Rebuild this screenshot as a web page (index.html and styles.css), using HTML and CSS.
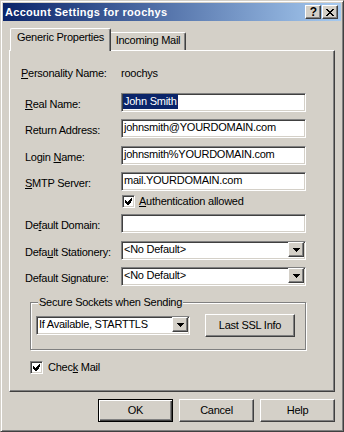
FILE: index.html
```html
<!DOCTYPE html>
<html lang="en">
<head>
    <meta charset="UTF-8">
    <title>Account Settings for roochys</title>
    <link rel="stylesheet" href="styles.css">
</head>
<body>
    <div class="window">
        <div class="titlebar">
            <span class="title">Account Settings for roochys</span>
            <div class="title-buttons">
                <span class="tbtn help">?</span>
                <span class="tbtn">
                    <svg width="8" height="7" viewBox="0 0 8 7" shape-rendering="crispEdges">
                        <path d="M0 0h2v1h-2zM6 0h2v1h-2zM1 1h2v1h-2zM5 1h2v1h-2zM2 2h4v1h-4zM3 3h2v1h-2zM2 4h4v1h-4zM1 5h2v1h-2zM5 5h2v1h-2zM0 6h2v1h-2zM6 6h2v1h-2z" fill="#000"/>
                    </svg>
                </span>
            </div>
        </div>

        <div class="dialog-body">
            <div class="tabs">
                <div class="tab active">Generic Properties</div>
                <div class="tab">Incoming Mail</div>
            </div>

            <div class="panel">
                <div class="info-row">
                    <span class="info-label"><u>P</u>ersonality Name:</span>
                    <span>roochys</span>
                </div>

                <div class="field-row first">
                    <span class="label"><u>R</u>eal Name:</span>
                    <div class="field"><span class="selected">John Smith</span></div>
                </div>
                <div class="field-row">
                    <span class="label">Return Address:</span>
                    <div class="field">johnsmith@YOURDOMAIN.com</div>
                </div>
                <div class="field-row gap8">
                    <span class="label">Login <u>N</u>ame:</span>
                    <div class="field">johnsmith%YOURDOMAIN.com</div>
                </div>
                <div class="field-row">
                    <span class="label"><u>S</u>MTP Server:</span>
                    <div class="field">mail.YOURDOMAIN.com</div>
                </div>

                <div class="check-row auth">
                    <span class="checkbox">
                        <svg width="7" height="7" viewBox="0 0 7 7" shape-rendering="crispEdges">
                            <path d="M6 0h1v3h-1zM5 1h1v4h-1zM4 2h1v4h-1zM3 3h1v4h-1zM2 4h1v3h-1zM1 3h1v3h-1zM0 2h1v3h-1z" fill="#000"/>
                        </svg>
                    </span>
                    <span><u>A</u>uthentication allowed</span>
                </div>

                <div class="field-row domain">
                    <span class="label">De<u>f</u>ault Domain:</span>
                    <div class="field"></div>
                </div>
                <div class="field-row gap8">
                    <span class="label">Defa<u>u</u>lt Stationery:</span>
                    <div class="field combo">
                        <span class="combo-text">&lt;No Default&gt;</span>
                        <span class="drop">
                            <svg width="7" height="4" viewBox="0 0 7 4" shape-rendering="crispEdges"><path d="M0 0h7v1h-7zM1 1h5v1h-5zM2 2h3v1h-3zM3 3h1v1h-1z" fill="#000"/></svg>
                        </span>
                    </div>
                </div>
                <div class="field-row">
                    <span class="label">Default Signature:</span>
                    <div class="field combo">
                        <span class="combo-text">&lt;No Default&gt;</span>
                        <span class="drop">
                            <svg width="7" height="4" viewBox="0 0 7 4" shape-rendering="crispEdges"><path d="M0 0h7v1h-7zM1 1h5v1h-5zM2 2h3v1h-3zM3 3h1v1h-1z" fill="#000"/></svg>
                        </span>
                    </div>
                </div>

                <fieldset class="group">
                    <legend>Secure Sockets when Sending</legend>
                    <div class="group-row">
                        <div class="field combo ssl">
                            <span class="combo-text">If Available, STARTTLS</span>
                            <span class="drop">
                                <svg width="7" height="4" viewBox="0 0 7 4" shape-rendering="crispEdges"><path d="M0 0h7v1h-7zM1 1h5v1h-5zM2 2h3v1h-3zM3 3h1v1h-1z" fill="#000"/></svg>
                            </span>
                        </div>
                        <span class="btn ssl-btn">Last SSL Info</span>
                    </div>
                </fieldset>

                <div class="check-row mail">
                    <span class="checkbox">
                        <svg width="7" height="7" viewBox="0 0 7 7" shape-rendering="crispEdges">
                            <path d="M6 0h1v3h-1zM5 1h1v4h-1zM4 2h1v4h-1zM3 3h1v4h-1zM2 4h1v3h-1zM1 3h1v3h-1zM0 2h1v3h-1z" fill="#000"/>
                        </svg>
                    </span>
                    <span>Chec<u>k</u> Mail</span>
                </div>
            </div>

            <div class="actions">
                <span class="btn default">OK</span>
                <span class="btn">Cancel</span>
                <span class="btn">Help</span>
            </div>
        </div>
    </div>
</body>
</html>
```

FILE: styles.css
```css
* {
    box-sizing: border-box;
}
body {
    margin: 0;
    background: #d4d0c8;
    font-family: "Liberation Sans", Arial, sans-serif;
    font-size: 11px;
    line-height: 13px;
    letter-spacing: -0.25px;
    color: #000;
}
u {
    text-decoration: underline;
    text-underline-offset: 1px;
}
.window {
    width: 344px;
    height: 432px;
    padding: 2px;
    border: 1px solid;
    border-color: #d4d0c8 #404040 #404040 #d4d0c8;
    box-shadow: inset 1px 1px #fff, inset -1px -1px #808080;
}
.titlebar {
    height: 18px;
    display: flex;
    align-items: center;
    justify-content: space-between;
    padding: 0 3px 0 2px;
    background: linear-gradient(to right, #0a246a, #a6caf0);
}
.title {
    color: #fff;
    font-weight: bold;
    letter-spacing: 0.3px;
}
.title-buttons {
    display: flex;
    gap: 1px;
}
.tbtn {
    width: 16px;
    height: 14px;
    display: flex;
    align-items: center;
    justify-content: center;
    background: #d4d0c8;
    border: 1px solid;
    border-color: #fff #404040 #404040 #fff;
    box-shadow: inset -1px -1px #808080;
}
.tbtn.help {
    font-weight: bold;
    font-size: 12px;
    letter-spacing: 0;
    padding-left: 1px;
}
.dialog-body {
    padding: 7px 0 0 6px;
}
.tabs {
    display: flex;
    align-items: flex-end;
    padding-left: 1px;
}
.tab {
    height: 18px;
    width: 75px;
    padding-top: 1px;
    text-align: center;
    border-top: 1px solid #fff;
    border-right: 1px solid #404040;
    box-shadow: inset -1px 0 #808080;
    border-top-right-radius: 2px;
}
.tab.active {
    position: relative;
    z-index: 1;
    width: 101px;
    height: 23px;
    margin-bottom: -1px;
    padding-top: 2px;
    background: #d4d0c8;
    border-left: 1px solid #fff;
    border-top-left-radius: 2px;
}
.panel {
    width: 326px;
    height: 342px;
    padding: 16px 0 0 15px;
    border: 1px solid;
    border-color: #fff #404040 #404040 #fff;
    box-shadow: inset -1px -1px #808080;
}
.info-row {
    display: flex;
    margin-left: -4px;
}
.info-label {
    width: 100px;
}
.field-row {
    display: flex;
    height: 19px;
    margin-top: 7px;
}
.field-row.first {
    margin-top: 13px;
}
.field-row.gap8 {
    margin-top: 8px;
}
.field-row.domain {
    margin-top: 6px;
}
.label {
    width: 96px;
    padding-top: 5px;
}
.field {
    width: 185px;
    height: 19px;
    padding: 1px 2px;
    background: #fff;
    border: 1px solid;
    border-color: #808080 #fff #fff #808080;
    box-shadow: inset 1px 1px #404040, inset -1px -1px #d4d0c8;
    white-space: nowrap;
    overflow: hidden;
}
.selected {
    display: inline-block;
    height: 15px;
    margin: -1px 0 0 -1px;
    padding: 1px 1px 0;
    background: #0a246a;
    color: #fff;
}
.combo {
    display: flex;
    padding: 1px 1px 1px 2px;
}
.combo-text {
    flex: 1;
}
.drop {
    width: 16px;
    height: 15px;
    margin-top: -1px;
    display: flex;
    align-items: center;
    justify-content: center;
    background: #d4d0c8;
    border: 1px solid;
    border-color: #fff #404040 #404040 #fff;
    box-shadow: inset -1px -1px #808080;
}
.check-row {
    display: flex;
    align-items: center;
    gap: 4px;
    height: 13px;
}
.check-row.auth {
    margin: 4px 0 0 97px;
}
.check-row.mail {
    margin: 11px 0 0 5px;
}
.check-row.mail span + span {
    margin-left: 1px;
}
.checkbox {
    width: 13px;
    height: 13px;
    display: flex;
    align-items: center;
    justify-content: center;
    background: #fff;
    border: 1px solid;
    border-color: #808080 #fff #fff #808080;
    box-shadow: inset 1px 1px #404040, inset -1px -1px #d4d0c8;
}
.group {
    width: 276px;
    margin: 10px 0 0 5px;
    padding: 5px 5px 12px;
    border: 1px solid #808080;
    box-shadow: inset 1px 1px #fff, 1px 1px #fff;
    min-inline-size: 0;
}
.group legend {
    margin-left: 2px;
    padding: 0 1px;
    background: #d4d0c8;
}
.group-row {
    display: flex;
    align-items: center;
    gap: 15px;
}
.field.ssl {
    width: 154px;
}
.btn {
    width: 75px;
    height: 23px;
    display: flex;
    align-items: center;
    justify-content: center;
    background: #d4d0c8;
    border: 1px solid;
    border-color: #fff #404040 #404040 #fff;
    box-shadow: inset -1px -1px #808080;
}
.btn.ssl-btn {
    width: 90px;
}
.btn.default {
    border-color: #000;
    box-shadow: inset 1px 1px #fff, inset -1px -1px #404040, inset -2px -2px #808080;
}
.actions {
    display: flex;
    justify-content: flex-end;
    gap: 6px;
    width: 326px;
    margin-top: 7px;
}
```
